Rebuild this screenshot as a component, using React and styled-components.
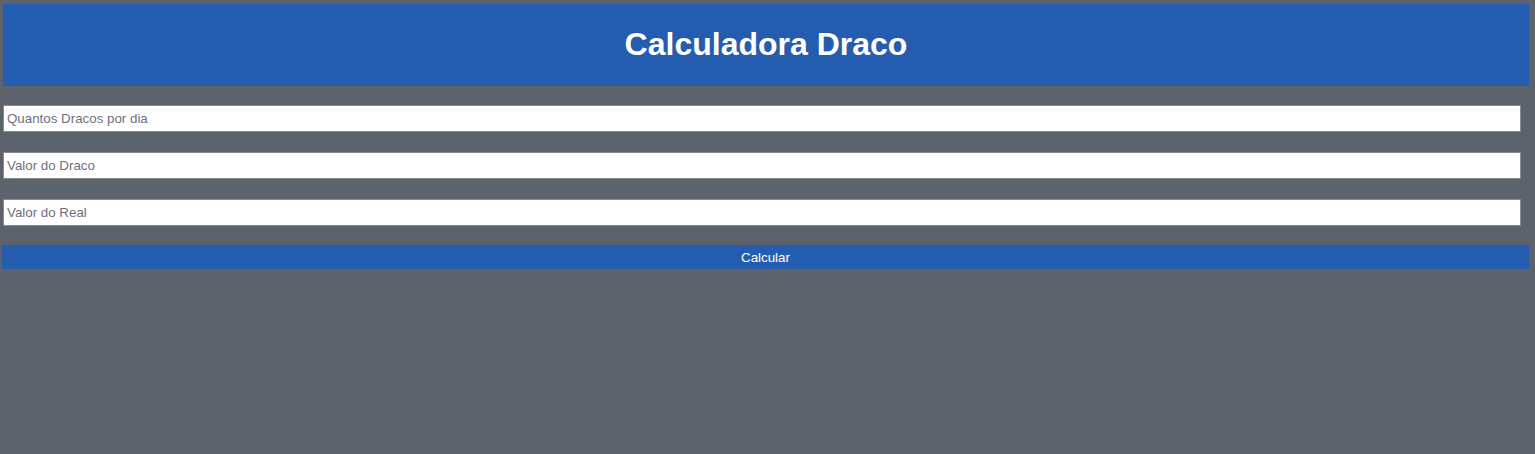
import React from "react"
import styled, { createGlobalStyle } from "styled-components"

const GlobalStyle = createGlobalStyle`
  html, body {
    margin: 0;
    padding: 0;
    background: #5c636d;
    font-family: "Liberation Sans", Arial, sans-serif;
  }
`

const Page = styled.div`
  min-height: 454px;
  padding: 4px 6px 0 3px;
  box-sizing: border-box;
`

const Header = styled.header`
  height: 82px;
  background: #245db0;
  display: flex;
  align-items: center;
  justify-content: center;
`

const Title = styled.h1`
  margin: 0;
  color: #ffffff;
  font-size: 32px;
  font-weight: 700;
  padding-bottom: 2px;
`

const Form = styled.form`
  margin-top: 19px;
  display: flex;
  flex-direction: column;
  gap: 20px;
`

const Field = styled.input`
  width: calc(100% - 8px);
  height: 27px;
  box-sizing: border-box;
  margin: 0;
  padding: 1px 3px;
  border: 1px solid #8a8a8a;
  background: #ffffff;
  font-family: "Liberation Sans", Arial, sans-serif;
  font-size: 13.33px;
  color: #222;
  outline: none;

  &::placeholder {
    color: #6f6f80;
  }
`

const Button = styled.button`
  margin: -1px 0 0 -1px;
  width: calc(100% + 1px);
  height: 24px;
  border: none;
  background: #245db0;
  color: #ffffff;
  font-family: "Liberation Sans", Arial, sans-serif;
  font-size: 13.33px;
  cursor: pointer;
`

const App = () => (
  <>
    <GlobalStyle />
    <Page>
      <Header>
        <Title>Calculadora Draco</Title>
      </Header>
      <Form onSubmit={e => e.preventDefault()}>
        <Field type="number" placeholder="Quantos Dracos por dia" />
        <Field type="number" placeholder="Valor do Draco" />
        <Field type="number" placeholder="Valor do Real" />
        <Button type="submit">Calcular</Button>
      </Form>
    </Page>
  </>
)

export default App
